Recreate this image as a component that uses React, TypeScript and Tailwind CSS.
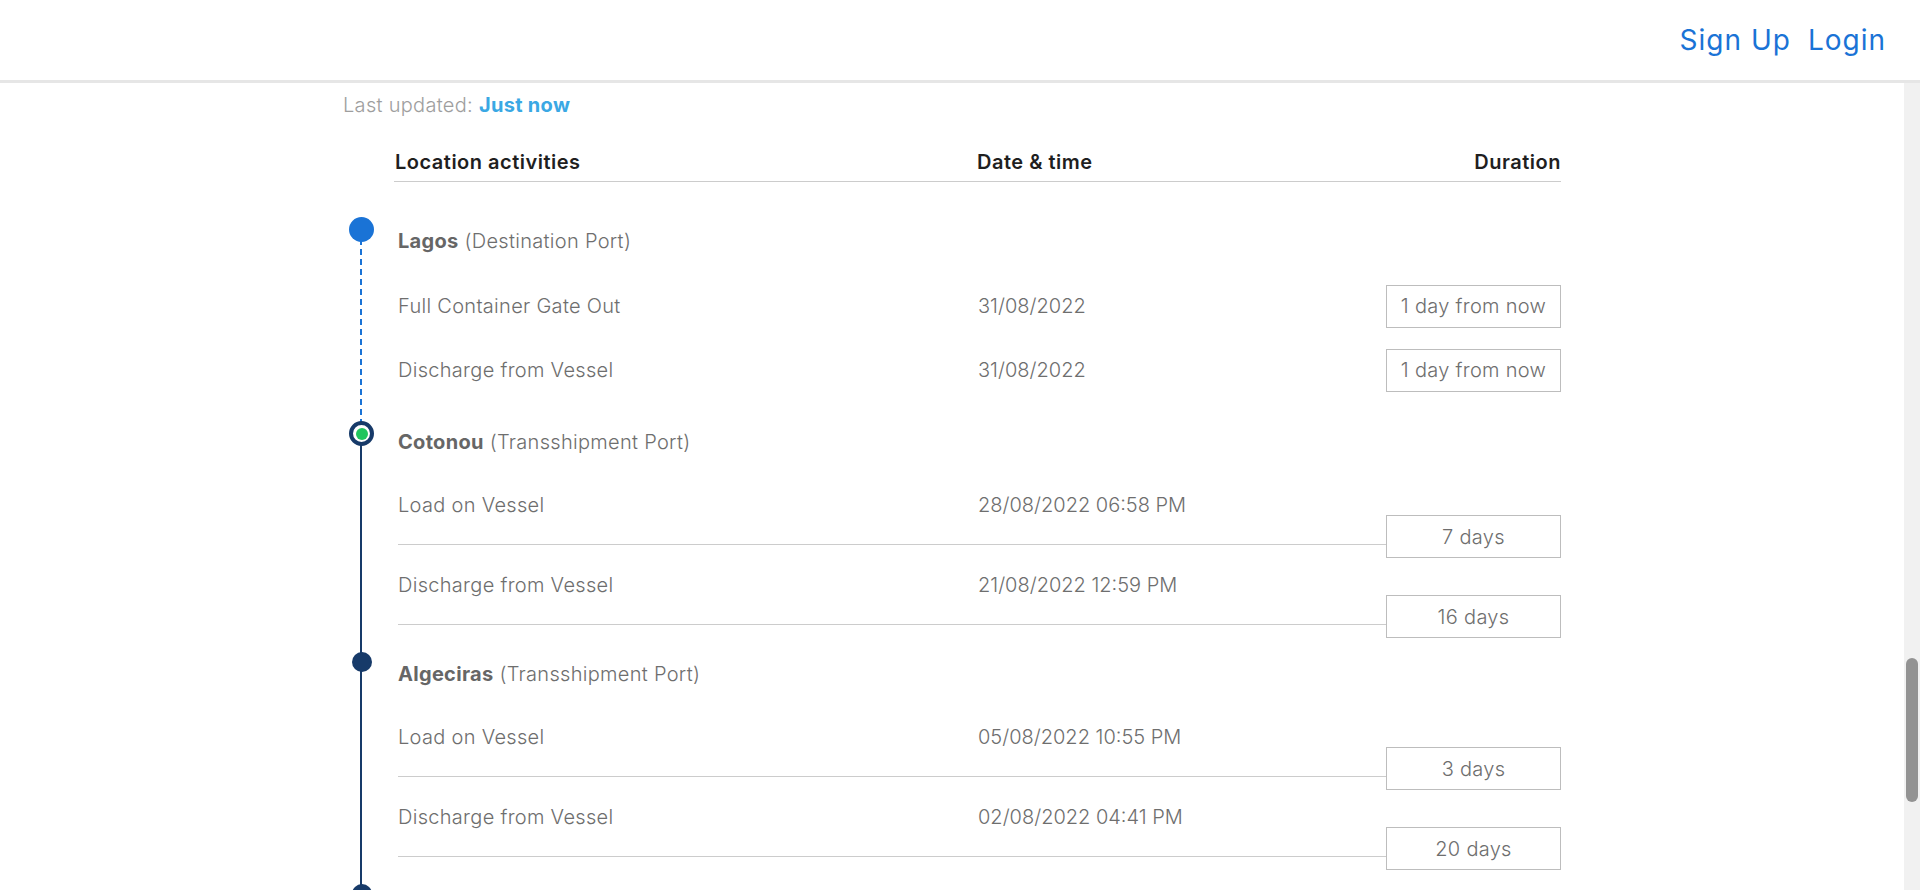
import React from 'react';

type Event = {
  label: string;
  date: string;
  duration: string;
  upcoming?: boolean;
};

type Stop = {
  name: string;
  kind: string;
  dot: 'next' | 'current' | 'past';
  events: Event[];
};

const STOPS: Stop[] = [
  {
    name: 'Lagos',
    kind: 'Destination Port',
    dot: 'next',
    events: [
      { label: 'Full Container Gate Out', date: '31/08/2022', duration: '1 day from now', upcoming: true },
      { label: 'Discharge from Vessel', date: '31/08/2022', duration: '1 day from now', upcoming: true },
    ],
  },
  {
    name: 'Cotonou',
    kind: 'Transshipment Port',
    dot: 'current',
    events: [
      { label: 'Load on Vessel', date: '28/08/2022 06:58 PM', duration: '7 days' },
      { label: 'Discharge from Vessel', date: '21/08/2022 12:59 PM', duration: '16 days' },
    ],
  },
  {
    name: 'Algeciras',
    kind: 'Transshipment Port',
    dot: 'past',
    events: [
      { label: 'Load on Vessel', date: '05/08/2022 10:55 PM', duration: '3 days' },
      { label: 'Discharge from Vessel', date: '02/08/2022 04:41 PM', duration: '20 days' },
    ],
  },
];

const FONT = "font-['Inter','Liberation_Sans',sans-serif]";
const BODY = 'text-[20px] leading-[24px] font-light tracking-[0.3px] text-[#6e6e6e]';
const DATE = 'text-[20px] leading-[24px] font-light tracking-normal text-[#6e6e6e]';

function Dot({ type }: { type: Stop['dot'] }) {
  if (type === 'next') {
    return <span className="absolute left-[6px] top-[25px] z-10 h-[25px] w-[25px] rounded-full bg-[#1a73d6]" />;
  }
  if (type === 'current') {
    return (
      <span className="absolute left-[6px] top-[28px] z-10 flex h-[25px] w-[25px] items-center justify-center rounded-full border-[4px] border-[#173a69] bg-white">
        <span className="h-[12px] w-[12px] rounded-full bg-[#20c55e]" />
      </span>
    );
  }
  return <span className="absolute left-[9px] top-[27px] z-10 h-[20px] w-[20px] rounded-full bg-[#173a69]" />;
}

function DurationBox({ text, shifted }: { text: string; shifted?: boolean }) {
  return (
    <div
      className={`flex h-[43px] w-[175px] shrink-0 items-center justify-center border border-[#bdbdbd] bg-white ${BODY} ${
        shifted ? 'mb-[-13px]' : ''
      }`}
    >
      {text}
    </div>
  );
}

function StopGroup({ stop }: { stop: Stop }) {
  const dotCenter = stop.dot === 'current' ? 'top-[40px]' : 'top-[37px]';
  const lineStyle =
    stop.dot === 'next'
      ? 'bg-[repeating-linear-gradient(to_bottom,#1a73d6_0px,#1a73d6_6px,transparent_6px,transparent_10px)]'
      : 'bg-[#173a69]';

  return (
    <div className="relative">
      <span className={`absolute bottom-[-40px] left-[17px] w-[2px] ${dotCenter} ${lineStyle}`} />
      <Dot type={stop.dot} />

      <div className="h-[72px] pl-[55px] pt-[37px] text-[20px] leading-[24px] tracking-[0.3px] text-[#6e6e6e]">
        <span className="font-bold text-[#666666]">{stop.name}</span>{' '}
        <span className="font-light">({stop.kind})</span>
      </div>

      <div className="pl-[55px]">
        {stop.events.map((ev, i) =>
          ev.upcoming ? (
            <div key={i} className={`flex h-[46px] items-center ${i === 0 ? 'mt-[19px]' : 'mt-[18px]'}`}>
              <div className={`w-[580px] ${BODY}`}>{ev.label}</div>
              <div className={`flex-1 ${DATE}`}>{ev.date}</div>
              <DurationBox text={ev.duration} />
            </div>
          ) : (
            <div key={i} className="flex items-end">
              <div className={`flex h-[80px] flex-1 items-center border-b border-[#cccccc] ${BODY}`}>
                <div className="w-[580px]">{ev.label}</div>
                <div className={DATE}>{ev.date}</div>
              </div>
              <DurationBox text={ev.duration} shifted />
            </div>
          )
        )}
      </div>
    </div>
  );
}

export default function App() {
  return (
    <div className={`flex h-[890px] flex-col overflow-hidden bg-white ${FONT}`}>
      {/* Top bar */}
      <header className="flex h-[83px] shrink-0 items-center justify-end gap-[17px] border-b-[3px] border-[#e6e6e6] pr-[34px] text-[28px] tracking-[1px] text-[#1a73d6]">
        <a href="#" className="leading-none">Sign Up</a>
        <a href="#" className="leading-none">Login</a>
      </header>

      <div className="flex min-h-0 flex-1">
        <main className="min-w-0 flex-1 overflow-hidden">
          <div className="mx-auto w-[1218px]">
            <p className="pt-[10px] text-[20px] leading-[24px] font-light tracking-[0.3px] text-[#9e9e9e]">
              Last updated: <span className="font-bold text-[#3aa8e4]">Just now</span>
            </p>

            <div className="ml-[51px] mt-[33px] flex border-b border-[#cccccc] pb-[7px] text-[20px] leading-[24px] font-semibold tracking-[0.5px] text-[#1f1f1f]">
              <div className="w-[583px] pl-[1px]">Location activities</div>
              <div className="flex-1">Date &amp; time</div>
              <div>Duration</div>
            </div>

            <div className="mt-[10px]">
              {STOPS.map((stop) => (
                <StopGroup key={stop.name} stop={stop} />
              ))}
              {/* next stop, below the fold */}
              <div className="relative h-[60px]">
                <span className="absolute left-[9px] top-[27px] h-[20px] w-[20px] rounded-full bg-[#173a69]" />
              </div>
            </div>
          </div>
        </main>

        {/* Scroll track */}
        <aside className="w-[16px] shrink-0 bg-[#f1f1f1] px-[2px] pt-[575px]">
          <div className="h-[144px] rounded-full bg-[#939393]" />
        </aside>
      </div>
    </div>
  );
}
